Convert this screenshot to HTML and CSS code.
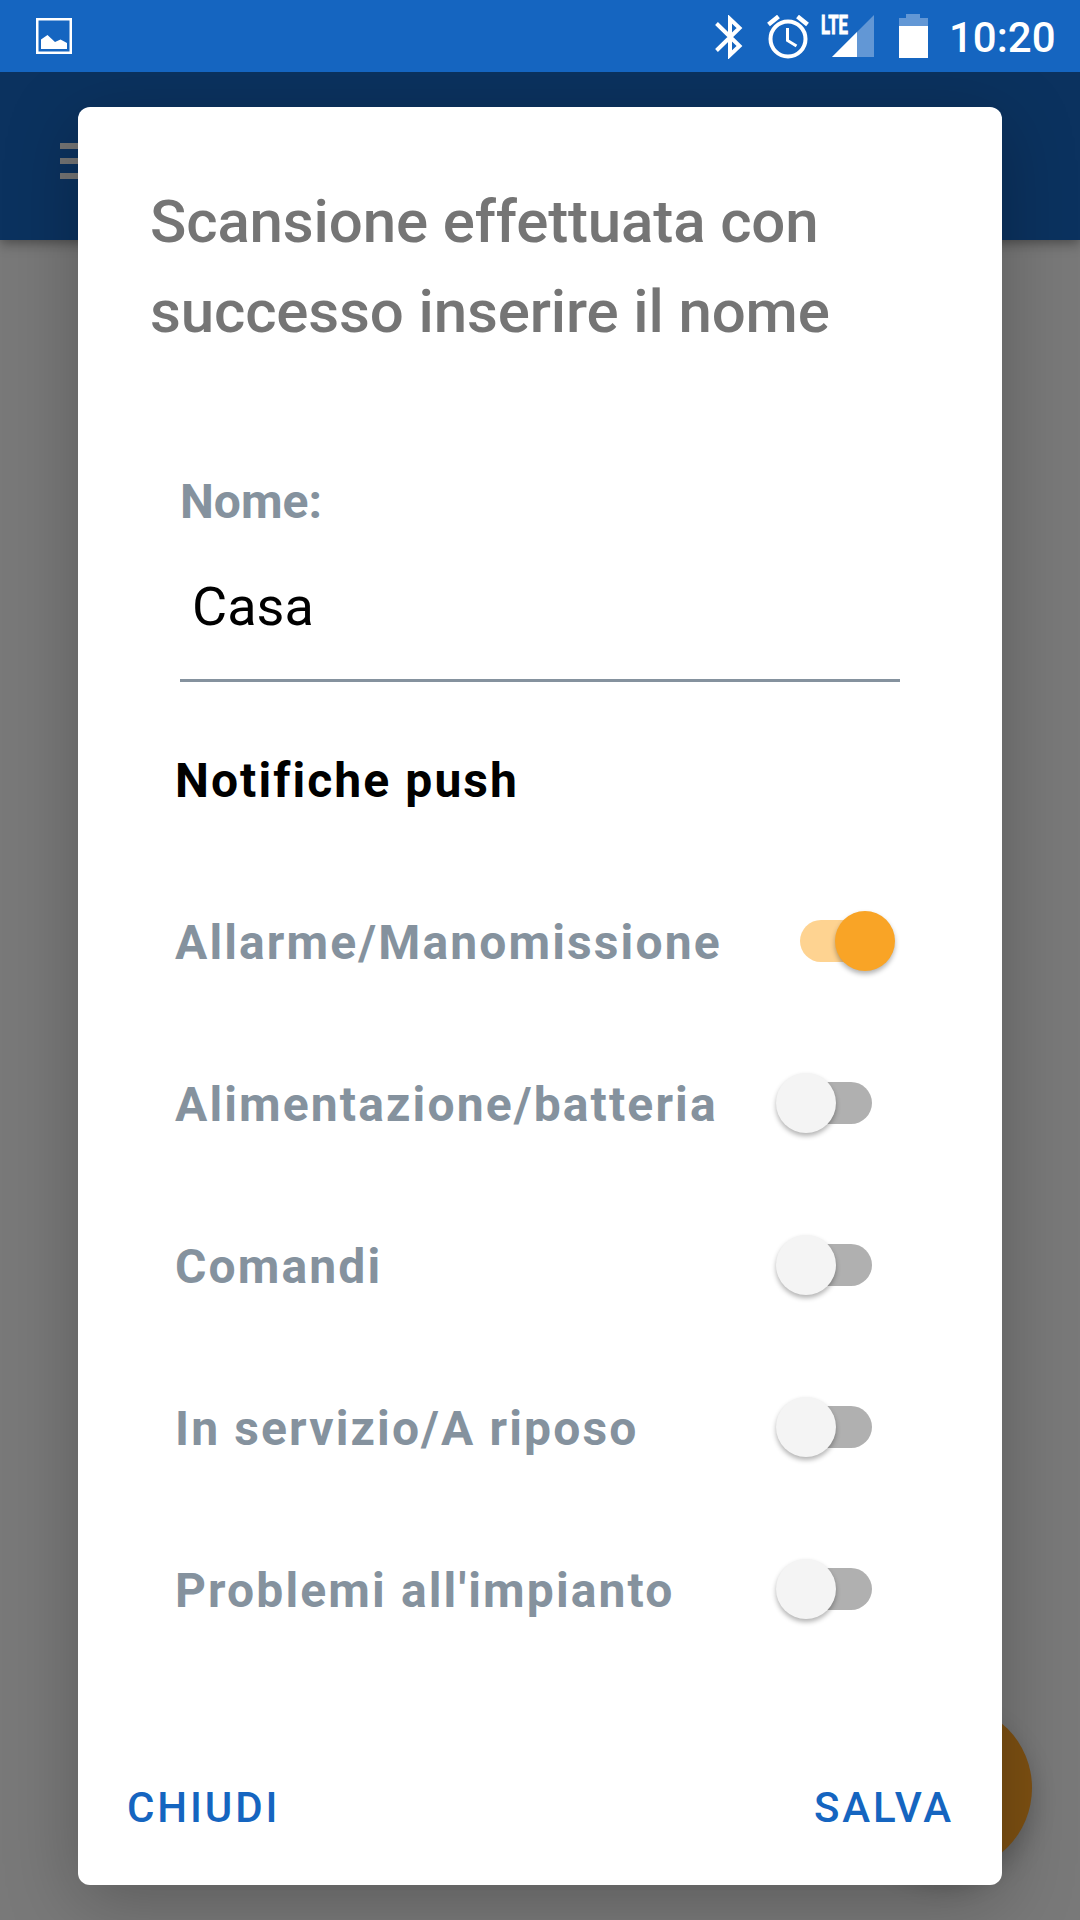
FILE: index.html
```html
<!DOCTYPE html>
<html lang="it">
<head>
<meta charset="utf-8">
<title>Notifiche push</title>
<link rel="stylesheet" href="styles.css">
</head>
<body>
<div class="screen">
  <header class="status-bar">
    <svg class="icon-picture" width="36" height="36" viewBox="0 0 36 36"><path d="M1.250 1.250h33.500v33.500h-33.500z" fill="none" stroke="#fff" stroke-width="2.500"/><path d="M5 31V21.500l6.500-4.500 7.500 7 5.500-2.500 6.500 3.500V31z" fill="#fff"/></svg>
    <div class="status-right">
      <svg class="icon-bluetooth" width="28" height="44" viewBox="0 0 28 44"><path d="M1.500 8.500L24.500 31 15 40V4l9.500 9L1.500 35.500" fill="none" stroke="#fff" stroke-width="4"/></svg>
      <svg class="icon-alarm" width="42" height="44" viewBox="0 0 42 44"><circle cx="21" cy="24" r="17.500" fill="none" stroke="#fff" stroke-width="4"/><path d="M1.500 9.500l10-8M40.500 9.500l-10-8" stroke="#fff" stroke-width="4.500"/><path d="M20.500 13v12.500l9 5.500" fill="none" stroke="#fff" stroke-width="3"/></svg>
      <svg class="icon-signal" width="56" height="57" viewBox="-2 -13 56 57"><path d="M11 42L53 0v42z" fill="#fff" fill-opacity=".33"/><path d="M11 42l25-25v25z" fill="#fff"/><text x="0" y="18.500" class="lte" textLength="27" lengthAdjust="spacingAndGlyphs">LTE</text></svg>
      <svg class="icon-battery" width="29" height="44" viewBox="0 0 29 44"><path d="M0 12V4h7V0h14v4h8v8z" fill="#fff" fill-opacity=".33"/><path d="M0 12h29v32H0z" fill="#fff"/></svg>
      <span class="clock">10:20</span>
    </div>
  </header>
  <div class="app-bar">
    <svg width="54" height="36" viewBox="0 0 54 36"><path d="M0 0h54v6H0zM0 15h54v6H0zM0 30h54v6H0z" fill="#757575"/></svg>
  </div>
  <div class="fab"></div>
  <main class="dialog">
    <h1 class="title">Scansione effettuata con<br>successo inserire il nome</h1>
    <div class="field">
      <div class="field-label">Nome:</div>
      <div class="field-value">Casa</div>
    </div>
    <h2 class="section">Notifiche push</h2>
    <div class="row on"><span>Allarme/Manomissione</span><i class="switch"></i></div>
    <div class="row"><span>Alimentazione/batteria</span><i class="switch"></i></div>
    <div class="row"><span>Comandi</span><i class="switch"></i></div>
    <div class="row"><span>In servizio/A riposo</span><i class="switch"></i></div>
    <div class="row"><span>Problemi all'impianto</span><i class="switch"></i></div>
    <footer class="actions"><span>CHIUDI</span><span>SALVA</span></footer>
  </main>
</div>
</body>
</html>
```
FILE: styles.css
```css
* { box-sizing: border-box; }
body { margin: 0; font-family: Roboto, sans-serif; }
h1, h2 { margin: 0; }
svg { display: block; flex: none; }
.screen {
  position: relative;
  width: 1080px;
  height: 1920px;
  overflow: hidden;
  background: #797979;
}
.status-bar {
  position: relative;
  z-index: 3;
  display: flex;
  justify-content: space-between;
  height: 72px;
  padding: 0 26px 0 36px;
  background: #1565c0;
}
.icon-picture { margin-top: 18px; }
.status-right { display: flex; padding-top: 15px; }
.icon-alarm { margin-left: 24px; }
.icon-signal { margin: -13px 0 0 10px; }
.icon-battery { margin-left: 24px; margin-top: -1px; }
.lte { font: 700 25px Roboto, sans-serif; fill: #fff; stroke: #fff; stroke-width: .9px; }
.clock {
  width: 105px;
  margin-left: 21px;
  font-size: 42px;
  font-weight: 500;
  line-height: 45px;
  color: #fff;
  white-space: nowrap;
}
.app-bar {
  display: flex;
  height: 168px;
  padding: 71px 0 0 60px;
  background: #0b325f;
  box-shadow: 0 3px 12px rgba(0, 0, 0, .4);
}
.fab {
  position: absolute;
  left: 864px;
  top: 1704px;
  width: 168px;
  height: 168px;
  border-radius: 50%;
  background: #7d5012;
  box-shadow: 0 12px 24px rgba(0, 0, 0, .22);
}
.dialog {
  position: absolute;
  z-index: 2;
  left: 78px;
  top: 107px;
  display: flex;
  flex-direction: column;
  width: 924px;
  height: 1778px;
  padding: 70px 48px 0;
  border-radius: 12px;
  background: #fff;
  box-shadow: 0 16px 72px rgba(0, 0, 0, .25);
}
.title {
  padding-left: 24px;
  font-size: 60px;
  font-weight: 500;
  line-height: 90px;
  letter-spacing: -.130px;
  color: #757575;
}
.field {
  width: 720px;
  height: 208px;
  margin: 117px 0 0 54px;
  border-bottom: 3px solid #85929e;
}
.field-label { font-size: 48px; font-weight: 700; line-height: 56px; color: #85929e; }
.field-value { padding: 45px 0 0 12px; font-size: 54px; line-height: 64px; color: #000; }
.section {
  margin: 71px 0 52px 49px;
  font-size: 48px;
  font-weight: 700;
  line-height: 56px;
  letter-spacing: 2.080px;
}
.row {
  display: flex;
  align-items: center;
  justify-content: space-between;
  height: 162px;
  padding: 0 82px 0 49px;
  font-size: 48px;
  font-weight: 700;
  letter-spacing: 2.130px;
  color: #85929e;
}
.on { padding-right: 64px; }
.switch {
  position: relative;
  width: 91px;
  height: 42px;
  margin-top: -2px;
  border-radius: 21px;
  background: #b0b0b0;
}
.on .switch { width: 90px; }
.switch::after {
  content: "";
  position: absolute;
  left: -5px;
  top: -9.500px;
  width: 60px;
  height: 60px;
  border-radius: 50%;
  background: #f4f4f4;
  box-shadow: 0 3px 5px rgba(0, 0, 0, .3);
}
.on .switch { background: #fed391; }
.on .switch::after { left: 35px; background: #f9a426; }
.actions {
  display: flex;
  justify-content: space-between;
  padding-left: 1px;
  margin-top: 112px;
  font-size: 42px;
  font-weight: 500;
  line-height: 50px;
  letter-spacing: 2.900px;
  color: #1565c0;
}
```
